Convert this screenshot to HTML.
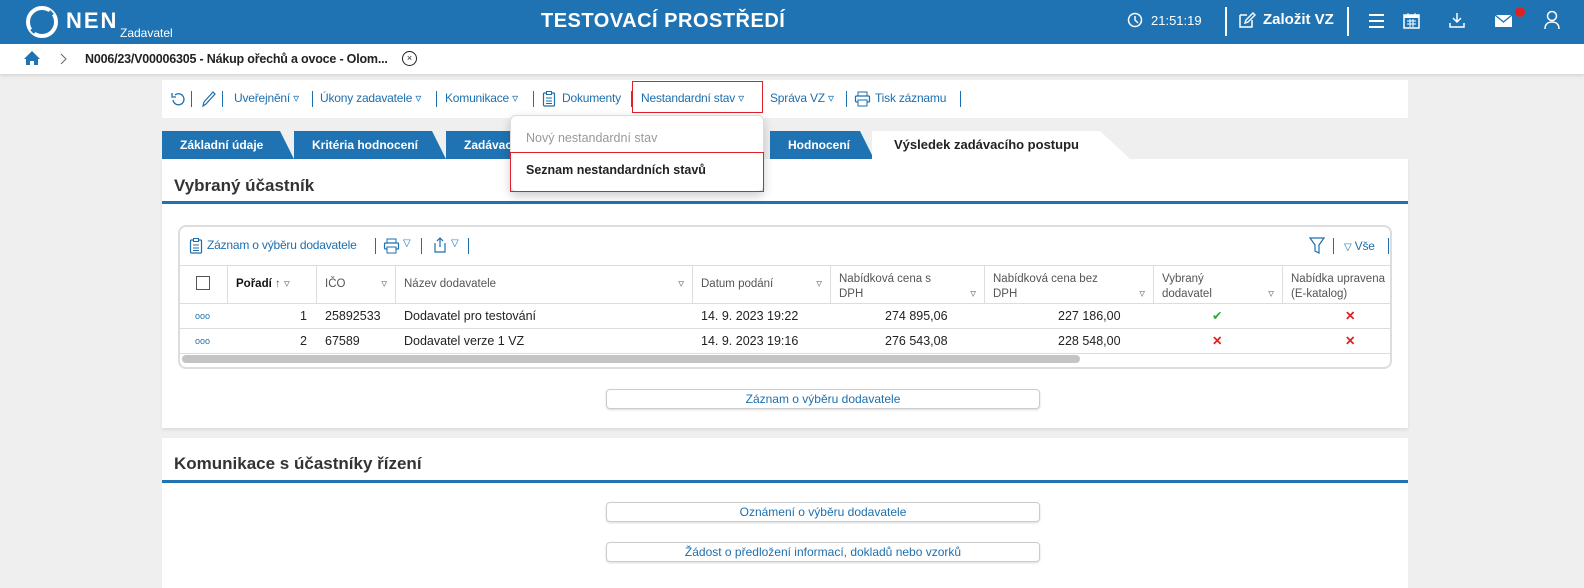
<!DOCTYPE html>
<html><head><meta charset="utf-8"><style>
*{box-sizing:border-box;margin:0;padding:0}
body{width:1584px;height:588px;overflow:hidden;background:#efefef;font-family:"Liberation Sans",sans-serif;font-size:12px;color:#222;position:relative}
.a{position:absolute;white-space:nowrap}
.blue{color:#1d6fae}
.hdr{left:0;top:0;width:1584px;height:44px;background:#1f73b2}
.bc{left:0;top:44px;width:1584px;height:30px;background:#fff;box-shadow:0 2px 3px rgba(0,0,0,.1)}
.panel{background:#fff}
.sep{display:inline-block;width:1px;height:16px;background:#1d6fae;vertical-align:middle;margin:0 4px}
.vs{position:absolute;width:1px;height:16px;background:#1d6fae}
.tb{position:absolute;top:91px;color:#1d6fae;font-size:12px;letter-spacing:-.2px;white-space:nowrap}
.tab{top:131px;height:28px;background:#1f73b2;color:#fff;font-weight:bold;font-size:12px;line-height:29px;padding-left:18px;clip-path:polygon(0 0,calc(100% - 14px) 0,100% 100%,0 100%)}
.th{top:266px;height:37px;border-right:1px solid #ddd;color:#555;font-size:11.5px;padding:6px 8px;line-height:15px;white-space:nowrap;overflow:hidden}
.row{left:180px;width:1210px;height:25px;border-bottom:1px solid #ddd;font-size:12.5px;line-height:25px}
.btn{left:606px;width:434px;height:20px;border:1px solid #ccc;border-radius:4px;box-shadow:0 1px 2px rgba(0,0,0,.15);background:#fff;text-align:center;color:#1d6fae;font-size:12px;line-height:18px}
h2{font-size:17px;font-weight:bold;color:#333}
.line{height:3px;background:#1f73b2}
</style></head><body>
<div class="a hdr"></div>
<svg class="a" style="left:26px;top:6px" width="32" height="32" viewBox="0 0 32 32"><circle cx="16" cy="16" r="14" fill="none" stroke="#fff" stroke-width="4"/><path d="M6 26 L26 6" stroke="#1f73b2" stroke-width="5"/></svg>
<div class="a" style="left:66px;top:8px;color:#fff;font-size:22px;font-weight:bold;letter-spacing:2px">NEN</div>
<div class="a" style="left:120px;top:26px;color:#fff;font-size:12px">Zadavatel</div>
<div class="a" style="left:541px;top:10px;color:#fff;font-size:20px;font-weight:bold;letter-spacing:.5px">TESTOVACÍ PROSTŘEDÍ</div>
<svg class="a" style="left:1127px;top:12px" width="16" height="16"><circle cx="8" cy="8" r="6.5" fill="none" stroke="#fff" stroke-width="1.5"/><path d="M8 4v4l3 3" stroke="#fff" stroke-width="1.5" fill="none"/></svg>
<div class="a" style="left:1151px;top:13px;color:#fff;font-size:13px">21:51:19</div>
<div class="a" style="left:1225px;top:7px;width:2px;height:29px;background:#fff"></div>
<svg class="a" style="left:1238px;top:11px" width="18" height="18"><path d="M2 4h7M2 4v12h12v-7" stroke="#fff" stroke-width="1.5" fill="none"/><path d="M7 12l1-3 7-7 2 2-7 7z" stroke="#fff" stroke-width="1.4" fill="none"/></svg>
<div class="a" style="left:1263px;top:11px;color:#fff;font-size:15px;font-weight:bold">Založit VZ</div>
<div class="a" style="left:1347px;top:7px;width:2px;height:29px;background:#fff"></div>
<div class="a" style="left:1369px;top:14px;width:15px;height:2px;background:#fff;box-shadow:0 6px 0 #fff,0 12px 0 #fff"></div>
<svg class="a" style="left:1403px;top:12px" width="17" height="18"><rect x="1" y="3" width="15" height="13" fill="none" stroke="#fff" stroke-width="1.5"/><rect x="1" y="3" width="15" height="3" fill="#fff"/><path d="M5 1v4M12 1v4M4 9h9M4 12h9M7 7v8M10 7v8" stroke="#fff"/></svg>
<svg class="a" style="left:1448px;top:11px" width="18" height="18"><path d="M9 2v9M5 7l4 4 4-4M2 12v4h14v-4" stroke="#fff" stroke-width="1.5" fill="none"/></svg>
<svg class="a" style="left:1494px;top:14px" width="20" height="14"><rect x="1" y="1" width="17" height="12" fill="#fff"/><path d="M1 1l8.5 7 8.5-7" stroke="#1f73b2" stroke-width="1.3" fill="none"/></svg>
<div class="a" style="left:1515px;top:7px;width:10px;height:10px;border-radius:50%;background:#d22"></div>
<svg class="a" style="left:1544px;top:10px" width="16" height="20"><circle cx="8" cy="6" r="4.5" fill="none" stroke="#fff" stroke-width="1.5"/><path d="M1 19c0-5 3-7 7-7s7 2 7 7" stroke="#fff" stroke-width="1.5" fill="none"/></svg>

<div class="a bc"></div>
<svg class="a" style="left:23px;top:50px" width="18" height="16"><path d="M9 1L1 9h2v6h4v-4h4v4h4V9h2z" fill="#1f73b2"/></svg>
<svg class="a" style="left:60px;top:53px" width="8" height="12"><path d="M1 1l5 5-5 5" stroke="#666" fill="none"/></svg>
<div class="a" style="left:85px;top:52px;font-size:12.5px;font-weight:bold;color:#222;letter-spacing:-.2px">N006/23/V00006305 - Nákup ořechů a ovoce - Olom...</div>
<div class="a" style="left:402px;top:51px;width:15px;height:15px;border:1.3px solid #222;border-radius:50%;font-size:9px;line-height:12px;text-align:center">×</div>

<div class="a panel" style="left:162px;top:80px;width:1246px;height:38px"></div>
<svg class="a" style="left:170px;top:91px" width="16" height="16"><path d="M3 9a5.5 5.5 0 1 0 2-5" stroke="#1d6fae" stroke-width="1.3" fill="none"/><path d="M2 2v4h4" stroke="#1d6fae" stroke-width="1.3" fill="none"/></svg>
<div class="vs" style="left:191px;top:91px"></div>
<svg class="a" style="left:200px;top:90px" width="16" height="18"><path d="M3 16l1-4 9-10 2 2-9 10z" stroke="#1d6fae" stroke-width="1.2" fill="none"/></svg>
<div class="vs" style="left:222px;top:91px"></div>
<div class="tb" style="left:234px">Uveřejnění ▿</div>
<div class="vs" style="left:312px;top:91px"></div>
<div class="tb" style="left:320px">Úkony zadavatele ▿</div>
<div class="vs" style="left:436px;top:91px"></div>
<div class="tb" style="left:445px">Komunikace ▿</div>
<div class="vs" style="left:533px;top:91px"></div>
<svg class="a" style="left:542px;top:90px" width="14" height="18"><rect x="1.5" y="3" width="11" height="13" rx="1" stroke="#1d6fae" stroke-width="1.2" fill="none"/><rect x="4.5" y="1.5" width="5" height="3" fill="#fff" stroke="#1d6fae"/><path d="M4 8h6M4 11h6M4 13.5h6" stroke="#1d6fae"/></svg>
<div class="tb" style="left:562px">Dokumenty</div>
<div class="vs" style="left:631px;top:91px"></div>
<div class="tb" style="left:641px">Nestandardní stav ▿</div>
<div class="tb" style="left:770px">Správa VZ ▿</div>
<div class="vs" style="left:846px;top:91px"></div>
<svg class="a" style="left:854px;top:91px" width="17" height="16"><rect x="4" y="1" width="9" height="4" stroke="#1d6fae" fill="none"/><rect x="1.5" y="5" width="14" height="6" rx="1" stroke="#1d6fae" stroke-width="1.2" fill="none"/><rect x="4" y="9" width="9" height="6" fill="#fff" stroke="#1d6fae"/></svg>
<div class="tb" style="left:875px">Tisk záznamu</div>
<div class="vs" style="left:960px;top:91px"></div>
<div class="a" style="left:632px;top:81px;width:131px;height:32px;border:1px solid #e0202a"></div>

<div class="a tab" style="left:162px;width:132px">Základní údaje</div>
<div class="a tab" style="left:294px;width:152px">Kritéria hodnocení</div>
<div class="a tab" style="left:446px;width:100px">Zadávací</div>
<div class="a tab" style="left:770px;width:104px">Hodnocení</div>
<div class="a" style="left:872px;top:131px;width:258px;height:28px;background:#fff;font-weight:bold;font-size:13px;line-height:28px;padding-left:22px;clip-path:polygon(0 0,calc(100% - 30px) 0,100% 100%,0 100%)">Výsledek zadávacího postupu</div>

<div class="a panel" style="left:162px;top:159px;width:1246px;height:269px;box-shadow:0 2px 3px rgba(0,0,0,.08)"></div>
<h2 class="a" style="left:174px;top:176px">Vybraný účastník</h2>
<div class="a line" style="left:162px;top:201px;width:1246px"></div>

<div class="a" style="left:178px;top:225px;width:1214px;height:144px;border:2px solid #ddd;border-radius:8px"></div>
<svg class="a" style="left:189px;top:237px" width="14" height="18"><rect x="1.5" y="3" width="11" height="13" rx="1" stroke="#1d6fae" stroke-width="1.2" fill="none"/><rect x="4.5" y="1.5" width="5" height="3" fill="#fff" stroke="#1d6fae"/><path d="M4 8h6M4 11h6M4 13.5h6" stroke="#1d6fae"/></svg>
<div class="tb" style="left:207px;top:238px">Záznam o výběru dodavatele</div>
<div class="vs" style="left:375px;top:238px"></div>
<svg class="a" style="left:383px;top:238px" width="17" height="16"><rect x="4" y="1" width="9" height="4" stroke="#1d6fae" fill="none"/><rect x="1.5" y="5" width="14" height="6" rx="1" stroke="#1d6fae" stroke-width="1.2" fill="none"/><rect x="4" y="9" width="9" height="6" fill="#fff" stroke="#1d6fae"/></svg>
<div class="tb" style="left:403px;top:238px;font-size:10px">▽</div>
<div class="vs" style="left:421px;top:238px"></div>
<svg class="a" style="left:432px;top:236px" width="16" height="18"><path d="M3 7v9h10V7" stroke="#1d6fae" stroke-width="1.2" fill="none"/><path d="M8 11V2M5 5l3-3 3 3" stroke="#1d6fae" stroke-width="1.2" fill="none"/></svg>
<div class="tb" style="left:451px;top:238px;font-size:10px">▽</div>
<div class="vs" style="left:468px;top:238px"></div>
<svg class="a" style="left:1309px;top:237px" width="16" height="18"><path d="M1 1h14l-5 7v8l-4-2V8z" stroke="#1d6fae" stroke-width="1.2" fill="none"/></svg>
<div class="vs" style="left:1333px;top:238px"></div>
<div class="tb" style="left:1344px;top:239px"><span style="font-size:10px">▽</span> Vše</div>
<div class="vs" style="left:1388px;top:238px"></div>
<div class="a" style="left:180px;top:265px;width:1210px;height:1px;background:#ddd"></div>
<div class="a th" style="left:180px;width:48px"><div style="width:14px;height:14px;border:1px solid #555;margin:4px 0 0 8px"></div></div>
<div class="a th" style="left:228px;width:89px;color:#111;font-weight:bold;padding-top:11px">Pořadí <span class="blue">↑</span> <span style="color:#777;font-weight:normal">▿</span></div>
<div class="a th" style="left:317px;width:79px;padding-top:11px">IČO <span style="float:right;color:#777">▿</span></div>
<div class="a th" style="left:396px;width:297px;padding-top:11px">Název dodavatele <span style="float:right;color:#777">▿</span></div>
<div class="a th" style="left:693px;width:138px;padding-top:11px">Datum podání <span style="float:right;color:#777">▿</span></div>
<div class="a th" style="left:831px;width:154px">Nabídková cena s<br>DPH <span style="float:right;color:#777">▿</span></div>
<div class="a th" style="left:985px;width:169px">Nabídková cena bez<br>DPH <span style="float:right;color:#777">▿</span></div>
<div class="a th" style="left:1154px;width:129px">Vybraný<br>dodavatel <span style="float:right;color:#777">▿</span></div>
<div class="a th" style="left:1283px;width:107px;border-right:none">Nabídka upravena<br>(E-katalog)</div>
<div class="a" style="left:180px;top:303px;width:1210px;height:1px;background:#ddd"></div>
<div class="a row" style="top:304px"></div>
<div class="a row" style="top:329px"></div>
<div class="a" style="top:304px;left:0;width:1584px;font-size:12.5px;line-height:25px">
<span class="a blue" style="left:195px;font-size:9px">ooo</span><span class="a" style="left:300px">1</span><span class="a" style="left:325px">25892533</span><span class="a" style="left:404px">Dodavatel pro testování</span><span class="a" style="left:701px">14. 9. 2023 19:22</span><span class="a" style="left:885px">274 895,06</span><span class="a" style="left:1058px">227 186,00</span><span class="a" style="left:1212px;color:#3a3">✔</span><span class="a" style="left:1345px;color:#d22;font-weight:bold">✕</span></div>
<div class="a" style="top:329px;left:0;width:1584px;font-size:12.5px;line-height:25px">
<span class="a blue" style="left:195px;font-size:9px">ooo</span><span class="a" style="left:300px">2</span><span class="a" style="left:325px">67589</span><span class="a" style="left:404px">Dodavatel verze 1 VZ</span><span class="a" style="left:701px">14. 9. 2023 19:16</span><span class="a" style="left:885px">276 543,08</span><span class="a" style="left:1058px">228 548,00</span><span class="a" style="left:1212px;color:#d22;font-weight:bold">✕</span><span class="a" style="left:1345px;color:#d22;font-weight:bold">✕</span></div>
<div class="a" style="left:182px;top:355px;width:898px;height:8px;border-radius:4px;background:#c4c4c4"></div>

<div class="a btn" style="top:389px">Záznam o výběru dodavatele</div>

<div class="a panel" style="left:162px;top:438px;width:1246px;height:150px"></div>
<h2 class="a" style="left:174px;top:454px">Komunikace s účastníky řízení</h2>
<div class="a line" style="left:162px;top:480px;width:1246px"></div>
<div class="a btn" style="top:502px">Oznámení o výběru dodavatele</div>
<div class="a btn" style="top:542px">Žádost o předložení informací, dokladů nebo vzorků</div>

<div class="a" style="left:510px;top:115px;width:254px;height:77px;background:#fff;border:1px solid #ddd;border-radius:6px;box-shadow:0 4px 10px rgba(0,0,0,.2)"></div>
<div class="a" style="left:526px;top:131px;color:#999;font-size:12.5px">Nový nestandardní stav</div>
<div class="a" style="left:510px;top:152px;width:254px;height:40px;border:1px solid #e0202a"></div>
<div class="a" style="left:526px;top:163px;font-size:12.5px;font-weight:bold;color:#222">Seznam nestandardních stavů</div>
</body></html>
